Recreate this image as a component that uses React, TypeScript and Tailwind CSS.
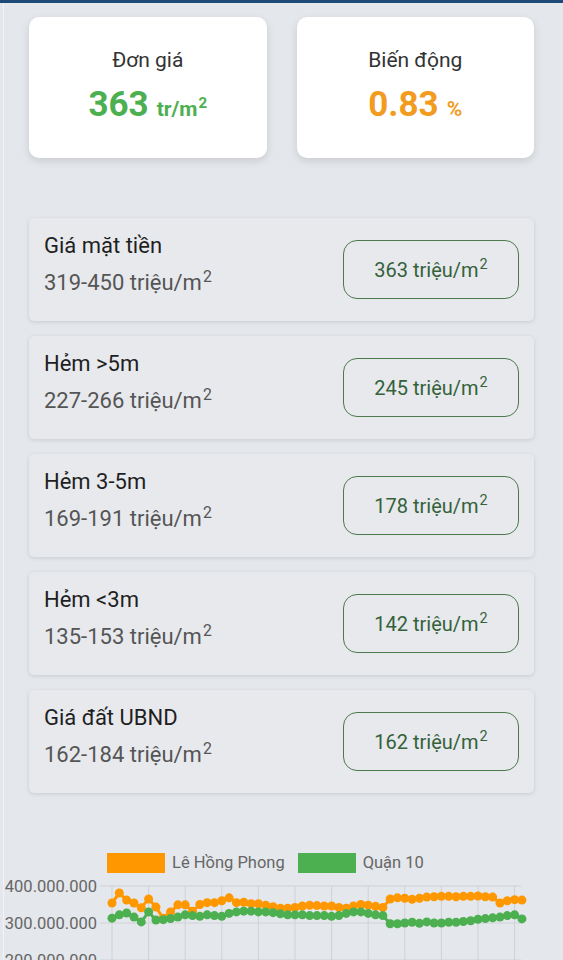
import React from "react";

const rows = [
  { title: "Giá mặt tiền", range: "319-450", price: "363" },
  { title: "Hẻm >5m", range: "227-266", price: "245" },
  { title: "Hẻm 3-5m", range: "169-191", price: "178" },
  { title: "Hẻm <3m", range: "135-153", price: "142" },
  { title: "Giá đất UBND", range: "162-184", price: "162" },
];

const orange = [
  354, 381, 362, 354, 341, 365, 343, 313, 330, 349, 349, 332, 350, 355, 355, 360, 368, 355, 356, 352,
  352, 348, 344, 340, 340, 342, 346, 348, 347, 346, 346, 342, 340, 346, 350, 348, 345, 342, 365, 368,
  367, 364, 367, 370, 371, 372, 372, 371, 372, 372, 373, 371, 370, 354, 360, 363, 362,
];

const green = [
  313, 322, 327, 316, 303, 330, 308, 309, 312, 316, 322, 320, 318, 322, 320, 318, 326, 330, 332, 332,
  330, 330, 328, 325, 322, 322, 322, 320, 320, 320, 318, 320, 326, 330, 330, 326, 322, 320, 298, 298,
  300, 302, 299, 303, 300, 300, 302, 302, 304, 306, 310, 312, 314, 316, 320, 322, 311,
];

// chart coords: svg top = page y 876
const px = (i: number) => 112 + i * 7.32;
const py = (v: number) => 10 + (400 - v) * 0.37;

function Series({ data, color }: { data: number[]; color: string }) {
  const d = data.map((v, i) => `${i === 0 ? "M" : "L"}${px(i).toFixed(1)},${py(v).toFixed(1)}`).join(" ");
  return (
    <g>
      <path d={d} fill="none" stroke={color} strokeWidth={3} strokeLinejoin="round" />
      {data.map((v, i) => (
        <circle key={i} cx={px(i)} cy={py(v)} r={4.5} fill={color} />
      ))}
    </g>
  );
}

function Sup({ children }: { children: React.ReactNode }) {
  return <sup className="text-[0.72em] ml-[1px]">{children}</sup>;
}

export default function App() {
  return (
    <div className="w-[563px] h-[960px] overflow-hidden bg-[#e4e7eb] font-['Roboto',sans-serif]">
      <div className="h-[3px] bg-[#1e4a78]" />
      <div className="ml-[3px] border-l border-[#f1f3f6] h-[957px] pl-[25px] pr-[29px] pt-[14px]">
        <div className="grid grid-cols-2 gap-[30px]">
          <div className="bg-white rounded-[10px] h-[141px] shadow-[0_3px_8px_rgba(0,0,0,0.12)] flex flex-col items-center pt-[29px]">
            <div className="text-[21px] text-[#333] leading-[28px]">Đơn giá</div>
            <div className="mt-[9px] text-[#4caf50] font-bold leading-[44px]">
              <span className="text-[35px]">363</span>
              <span className="text-[21px] ml-[8px]">
                tr/m<Sup>2</Sup>
              </span>
            </div>
          </div>
          <div className="bg-white rounded-[10px] h-[141px] shadow-[0_3px_8px_rgba(0,0,0,0.12)] flex flex-col items-center pt-[29px]">
            <div className="text-[21px] text-[#333] leading-[28px]">Biến động</div>
            <div className="mt-[9px] text-[#f29c1f] font-bold leading-[44px]">
              <span className="text-[35px]">0.83</span>
              <span className="text-[21px] ml-[8px]">%</span>
            </div>
          </div>
        </div>

        <div className="mt-[60px] flex flex-col gap-[15px]">
          {rows.map((r) => (
            <div
              key={r.title}
              className="h-[103px] rounded-[5px] bg-[#e7e9ed] shadow-[0_1px_4px_rgba(0,0,0,0.12)] flex items-center justify-between pl-[15px] pr-[15px]"
            >
              <div className="flex flex-col gap-[9px] -mt-[10px]">
                <div className="text-[22px] text-[#1f1f1f] leading-[28px]">{r.title}</div>
                <div className="text-[22px] text-[#555] leading-[28px]">
                  {r.range} triệu/m<Sup>2</Sup>
                </div>
              </div>
              <div className="w-[176px] h-[59px] rounded-[14px] border-[1.5px] border-[#4d7a4d] flex items-center justify-center text-[20px] text-[#34613a]">
                <span>
                  {r.price} triệu/m<Sup>2</Sup>
                </span>
              </div>
            </div>
          ))}
        </div>
      </div>

      <div className="relative -mt-[107px]">
        <div className="flex items-center h-[20px] pl-[107px] text-[16.5px] text-[#666]">
          <span className="w-[58px] h-[20px] bg-[#ff9800]" />
          <span className="ml-[7px]">Lê Hồng Phong</span>
          <span className="ml-[13px] w-[58px] h-[20px] bg-[#4caf50]" />
          <span className="ml-[7px]">Quận 10</span>
        </div>
        <svg width={563} height={84} className="mt-[3px] block">
          {[10, 47, 84].map((y) => (
            <line key={y} x1={100} x2={521} y1={y} y2={y} stroke="#cfd2d6" strokeWidth={1} />
          ))}
          {Array.from({ length: 12 }, (_, k) => (
            <line key={k} x1={112 + k * 36.6} x2={112 + k * 36.6} y1={10} y2={84} stroke="#cfd2d6" strokeWidth={1} />
          ))}
          {["400.000.000", "300.000.000", "200.000.000"].map((t, i) => (
            <text key={t} x={97} y={16 + i * 37} textAnchor="end" fontSize={16.5} fill="#666" fontFamily="Roboto, sans-serif">
              {t}
            </text>
          ))}
          <Series data={orange} color="#ff9800" />
          <Series data={green} color="#4caf50" />
        </svg>
      </div>
    </div>
  );
}
